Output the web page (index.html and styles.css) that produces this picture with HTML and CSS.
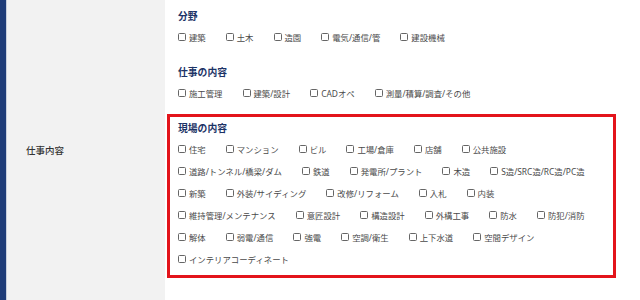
FILE: index.html
```html
<!DOCTYPE html>
<html lang="ja">
<head>
  <meta charset="UTF-8">
  <title>仕事内容</title>
  <link rel="stylesheet" href="styles.css">
</head>
<body>

<div class="form-row">
  <div class="row-label">仕事内容</div>

  <div class="row-body">

    <!-- 分野 -->
    <div class="group">
      <div class="group-title">分野</div>
      <div class="checks">
        <label class="check"><span class="box"></span>建築</label>
        <label class="check"><span class="box"></span>土木</label>
        <label class="check"><span class="box"></span>造園</label>
        <label class="check"><span class="box"></span>電気/通信/管</label>
        <label class="check"><span class="box"></span>建設機械</label>
      </div>
    </div>

    <!-- 仕事の内容 -->
    <div class="group">
      <div class="group-title">仕事の内容</div>
      <div class="checks">
        <label class="check"><span class="box"></span>施工管理</label>
        <label class="check"><span class="box"></span>建築/設計</label>
        <label class="check"><span class="box"></span>CADオペ</label>
        <label class="check"><span class="box"></span>測量/積算/調査/その他</label>
      </div>
    </div>

    <!-- 現場の内容 (highlighted) -->
    <div class="group highlight">
      <div class="group-title">現場の内容</div>
      <div class="checks">
        <label class="check"><span class="box"></span>住宅</label>
        <label class="check"><span class="box"></span>マンション</label>
        <label class="check"><span class="box"></span>ビル</label>
        <label class="check"><span class="box"></span>工場/倉庫</label>
        <label class="check"><span class="box"></span>店舗</label>
        <label class="check"><span class="box"></span>公共施設</label>
      </div>
      <div class="checks">
        <label class="check"><span class="box"></span>道路/トンネル/橋梁/ダム</label>
        <label class="check"><span class="box"></span>鉄道</label>
        <label class="check"><span class="box"></span>発電所/プラント</label>
        <label class="check"><span class="box"></span>木造</label>
        <label class="check"><span class="box"></span>S造/SRC造/RC造/PC造</label>
      </div>
      <div class="checks">
        <label class="check"><span class="box"></span>新築</label>
        <label class="check"><span class="box"></span>外装/サイディング</label>
        <label class="check"><span class="box"></span>改修/リフォーム</label>
        <label class="check"><span class="box"></span>入札</label>
        <label class="check"><span class="box"></span>内装</label>
      </div>
      <div class="checks">
        <label class="check"><span class="box"></span>維持管理/メンテナンス</label>
        <label class="check"><span class="box"></span>意匠設計</label>
        <label class="check"><span class="box"></span>構造設計</label>
        <label class="check"><span class="box"></span>外構工事</label>
        <label class="check"><span class="box"></span>防水</label>
        <label class="check"><span class="box"></span>防犯/消防</label>
      </div>
      <div class="checks">
        <label class="check"><span class="box"></span>解体</label>
        <label class="check"><span class="box"></span>弱電/通信</label>
        <label class="check"><span class="box"></span>強電</label>
        <label class="check"><span class="box"></span>空調/衛生</label>
        <label class="check"><span class="box"></span>上下水道</label>
        <label class="check"><span class="box"></span>空間デザイン</label>
      </div>
      <div class="checks">
        <label class="check"><span class="box"></span>インテリアコーディネート</label>
      </div>
    </div>

  </div>
</div>

</body>
</html>
```

FILE: styles.css
```css
body {
  font-family: "Noto Sans", "Noto Sans CJK JP", sans-serif;
  background: #fff;
  margin: 0;
  padding: 0;
}

.form-row {
  display: flex;
  height: 300px;
}

.row-label {
  width: 139px;
  flex-shrink: 0;
  background: #f2f2f2;
  border-left: 6px solid #1f3c78;
  box-shadow: inset 1px 0 0 #c9d0dd;
  display: flex;
  align-items: center;
  padding-left: 20px;
  font-size: 9.5px;
  font-weight: 500;
  color: #333;
}

.row-body {
  flex: 1;
  padding: 10px 35px 0 13px;
}

.group {
  margin-bottom: 18px;
}

.group-title {
  font-size: 9.8px;
  line-height: 14px;
  font-weight: bold;
  color: #1c3366;
  margin-bottom: 2px;
}

.checks {
  display: flex;
  height: 22px;
  align-items: center;
}

.check {
  display: flex;
  align-items: center;
  margin-right: 20px;
  font-size: 8.4px;
  color: #4a4a4a;
  white-space: nowrap;
}

.box {
  width: 8px;
  height: 8px;
  box-sizing: border-box;
  border: 1px solid #666;
  border-radius: 1.5px;
  background: #fff;
  margin-right: 3px;
}

.highlight {
  margin: -8px 0 0 -11px;
  border: 3px solid #e3141b;
  padding: 5px 8px;
}
```
